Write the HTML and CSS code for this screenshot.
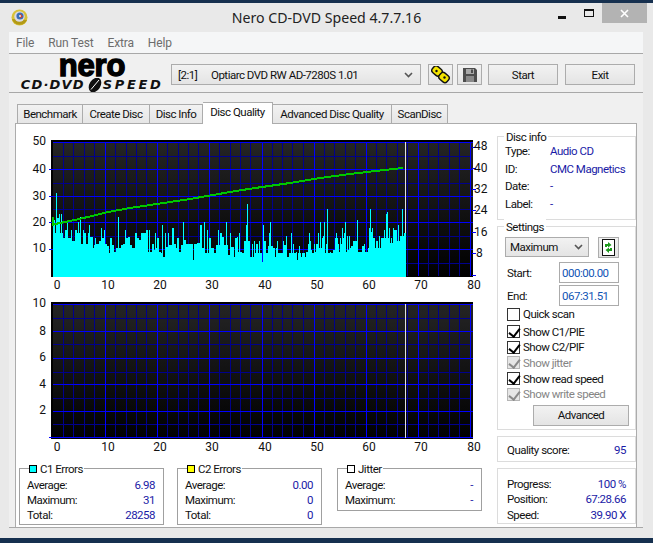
FILE: index.html
```html
<!DOCTYPE html>
<html lang="en">
<head>
<meta charset="utf-8">
<title>Nero CD-DVD Speed</title>
<link rel="stylesheet" href="styles.css">
</head>
<body>
<div class="window">
  <header class="titlebar">
    <svg class="app-icon" width="17" height="17" viewBox="0 0 17 17">
      <circle cx="8.5" cy="8.5" r="8" fill="#d8c23a"/>
      <path d="M1 10a8 8 0 0 0 15 1z" fill="#b39a16"/>
      <circle cx="8.5" cy="7.5" r="5.2" fill="#d9d9e4"/>
      <circle cx="9" cy="7" r="3.6" fill="#3a6fb8"/>
      <path d="M9 4.5l3 3-3 2z" fill="#d3432c"/>
      <circle cx="9" cy="7" r="1" fill="#eee"/>
    </svg>
    <h1 class="title">Nero CD-DVD Speed 4.7.7.16</h1>
    <div class="caption">
      <span class="cap-min"></span>
      <span class="cap-max"></span>
      <span class="cap-close">
        <svg width="9" height="9" viewBox="0 0 9 9"><path d="M1 1l7 7M8 1l-7 7" stroke="#fff" stroke-width="1.6"/></svg>
      </span>
    </div>
  </header>

  <div class="client">
    <nav class="menu"><span>File</span><span>Run Test</span><span>Extra</span><span>Help</span></nav>

    <div class="toolbar">
      <div class="logo">
        <div class="logo-nero">nero</div>
        <div class="logo-sub">
          <span class="logo-cd">CD·DVD</span>
          <svg class="logo-disc" width="18" height="14" viewBox="0 0 18 14">
            <ellipse cx="9" cy="7" rx="5.5" ry="8" transform="rotate(32 9 7)" fill="#111"/>
            <path d="M5 11.5L13 2" stroke="#fff" stroke-width="1"/>
          </svg>
          <span class="logo-speed">SPEED</span>
        </div>
      </div>
      <div class="combo drive"><span class="drive-id">[2:1]</span><span>Optiarc DVD RW AD-7280S 1.01</span><svg class="chev" width="9" height="6" viewBox="0 0 9 6"><path d="M1 1l3.500 3.500L8 1" fill="none" stroke="#555" stroke-width="1.6"/></svg></div>
      <button class="btn icon-btn gear">
        <svg width="20" height="18" viewBox="0 0 20 18">
          <g stroke="#111" stroke-width="1.4" fill="#f4e500">
            <rect x="1" y="1" width="10" height="8" rx="3" transform="rotate(40 6 5)"/>
            <rect x="8" y="7.500" width="10" height="8" rx="3" transform="rotate(40 13 11.500)"/>
          </g>
          <circle cx="5.500" cy="5" r="1.200" fill="#111"/><circle cx="13.500" cy="11.500" r="1.200" fill="#111"/>
        </svg>
      </button>
      <button class="btn icon-btn save">
        <svg width="14" height="14" viewBox="0 0 14 14">
          <path d="M0 0h12l2 2v12H0z" fill="#4d4d4d"/>
          <rect x="3" y="1" width="8" height="5" fill="#a9a9a9"/>
          <rect x="8" y="1.500" width="2" height="3.500" fill="#4d4d4d"/>
          <rect x="3" y="8" width="8" height="6" fill="#8a8a8a"/>
        </svg>
      </button>
      <button class="btn act start">Start</button>
      <button class="btn act exit">Exit</button>
    </div>

    <div class="tabs">
      <div class="tab">Benchmark</div>
      <div class="tab">Create Disc</div>
      <div class="tab">Disc Info</div>
      <div class="tab active">Disc Quality</div>
      <div class="tab">Advanced Disc Quality</div>
      <div class="tab">ScanDisc</div>
    </div>

    <main class="panel">
      <section class="charts">
        <svg class="chart first" width="481" height="164" viewBox="16 130 481 164">
          <defs>
            <linearGradient id="plotbg" x1="0" y1="0" x2="0" y2="1">
              <stop offset="0" stop-color="#252525"/><stop offset="1" stop-color="#000"/>
            </linearGradient>
          </defs>
          <rect x="51" y="140" width="422" height="137" fill="url(#plotbg)"/>
          <rect x="51" y="140" width="422" height="2" fill="#000"/>
          <rect x="51" y="140" width="2" height="137" fill="#000"/>
          <g class="grid-crisp">
            <path class="minor" d="M63 142V276M73 142V276M84 142V276M94 142V276M115 142V276M126 142V276M136 142V276M146 142V276M167 142V276M178 142V276M188 142V276M198 142V276M219 142V276M230 142V276M240 142V276M250 142V276M272 142V276M282 142V276M292 142V276M303 142V276M324 142V276M334 142V276M345 142V276M355 142V276M376 142V276M386 142V276M397 142V276M407 142V276M428 142V276M438 142V276M449 142V276M459 142V276M53 156H471M53 183H471M53 209H471M53 236H471M53 263H471"/>
            <path class="major" d="M105 142V276M157 142V276M209 142V276M262 142V276M314 142V276M366 142V276M418 142V276M470 142V276M53 142.500H473M53 169.500H473M53 196.500H473M53 222.500H473M53 249.500H473M49 169.500H53M49 196.500H53M49 222.500H53M49 249.500H53M472 147H476M472 168H476M472 189H476M472 210H476M472 232H476M472 253H476M472 275.500H476"/>
            <path class="marker" d="M405 142V276"/>
            <g transform="translate(50 185) scale(.33333)">
              <path class="c1" d="M9 275V105H15V145H18V25H21V100H27V87H30V145H33V87H36V145H39V160H45V135H51V105H54V160H63V135H66V168H75V135H81V145H85V110H88V145H90V96H93V178H99V135H102V145H108V178H114V145H117V120H120V155H129V190H132V180H135V158H138V178H147V168H153V128H156V160H162V135H165V178H171V182H177V205H180V158H186V180H192V200H198V190H204V96H207V190H213V180H219V178H225V135H228V158H234V155H240V180H246V190H255V145H261V158H267V165H273V145H288V135H294V200H297V135H300V200H306V178H312V195H315V145H318V190H321V158H327V200H333V205H336V120H339V215H345V145H348V185H354V145H357V180H366V130H372V178H378V188H381V158H387V200H393V180H399V110H402V165H408V178H429V225H432V178H441V175H450V120H456V190H462V110H465V205H471V135H474V205H477V160H483V190H492V205H498V180H504V135H507V180H510V145H516V155H522V180H528V110H531V180H534V210H540V275Z"/>
            </g>
            <g transform="translate(230 185) scale(.33333)">
              <path class="c1" d="M0 275V145H4V185H12V215H15V160H20V155H24V200H27V145H30V200H36V205H42V168H48V120H51V57H54V168H60V215H66V178H69V215H72V168H75V205H78V178H84V205H87V168H90V205H96V230H99V120H102V168H108V205H114V182H117V145H120V112H123V182H129V190H135V215H138V190H141V168H145V205H156V205H159V168H162V180H168V153H171V215H177V205H183V145H186V205H189V178H192V205H198V200H201V225H204V205H207V182H210V205H213V215H216V205H225V215H228V200H234V178H237V145H240V168H243V195H246V205H252V178H255V200H258V178H264V145H267V190H270V112H273V190H276V160H279V153H282V112H285V205H288V178H291V72H294V205H300V200H303V205H309V195H315V158H318V145H321V158H324V178H327V200H330V158H333V178H336V130H339V160H342V145H345V112H348V200H351V153H354V195H357V153H360V190H363V182H369V168H381V105H384V200H396V182H402V178H405V200H414V190H417V130H420V72H423V140H426V130H429V158H435V190H438V168H444V190H447V153H450V190H453V158H462V135H465V158H468V88H471V82H474V158H477V130H480V175H483V158H486V175H489V130H492V135H501V168H504V120H507V168H510V153H516V72H519V153H522V145H528V275Z"/>
            </g>
            <polyline class="speed" points="53,217 53,225 55,224 70,221 90,216.500 108,212 130,208 160,203.500 190,199 230,192 255,188 290,183 320,178 350,174 380,170.500 403,168"/>
          </g>
          <g class="axis end">
            <text x="46" y="145">50</text><text x="46" y="173">40</text><text x="46" y="200">30</text><text x="46" y="226">20</text><text x="46" y="252">10</text>
          </g>
          <g class="axis">
            <text x="474" y="150">48</text><text x="474" y="172">40</text><text x="474" y="193">32</text><text x="474" y="214">24</text><text x="474" y="236">16</text><text x="476" y="257">8</text>
          </g>
          <g class="axis mid">
            <text x="57" y="289">0</text><text x="108" y="289">10</text><text x="160" y="289">20</text><text x="212" y="289">30</text><text x="265" y="289">40</text><text x="317" y="289">50</text><text x="369" y="289">60</text><text x="421" y="289">70</text><text x="474" y="289">80</text>
          </g>
        </svg>

        <svg class="chart second" width="481" height="164" viewBox="16 295 481 164">
          <rect x="51" y="302" width="422" height="137" fill="url(#plotbg)"/>
          <rect x="51" y="302" width="422" height="2" fill="#000"/>
          <rect x="51" y="302" width="2" height="137" fill="#000"/>
          <g class="grid-crisp">
            <path class="minor" d="M63 304V438M73 304V438M84 304V438M94 304V438M115 304V438M126 304V438M136 304V438M146 304V438M167 304V438M178 304V438M188 304V438M198 304V438M219 304V438M230 304V438M240 304V438M250 304V438M272 304V438M282 304V438M292 304V438M303 304V438M324 304V438M334 304V438M345 304V438M355 304V438M376 304V438M386 304V438M397 304V438M407 304V438M428 304V438M438 304V438M449 304V438M459 304V438M53 318H471M53 344H471M53 372H471M53 398H471M53 424H471"/>
            <path class="major" d="M105 304V438M157 304V438M209 304V438M262 304V438M314 304V438M366 304V438M418 304V438M470 304V438M53 304.500H473M53 331.500H473M53 358.500H473M53 384.500H473M53 411.500H473M49 437.500H473"/>
            <path class="marker" d="M405 304V438"/>
          </g>
          <g class="axis end">
            <text x="46" y="307">10</text><text x="46" y="335">8</text><text x="46" y="361">6</text><text x="46" y="388">4</text><text x="46" y="414">2</text>
          </g>
          <g class="axis mid">
            <text x="57" y="451">0</text><text x="108" y="451">10</text><text x="160" y="451">20</text><text x="212" y="451">30</text><text x="265" y="451">40</text><text x="317" y="451">50</text><text x="369" y="451">60</text><text x="421" y="451">70</text><text x="474" y="451">80</text>
          </g>
        </svg>

        <div class="stats">
          <div class="stat">
            <div class="stat-legend"><i class="swatch cyan"></i>C1 Errors</div>
            <div class="row"><span>Average:</span><b>6.98</b></div>
            <div class="row"><span>Maximum:</span><b>31</b></div>
            <div class="row"><span>Total:</span><b>28258</b></div>
          </div>
          <div class="stat">
            <div class="stat-legend"><i class="swatch yellow"></i>C2 Errors</div>
            <div class="row"><span>Average:</span><b>0.00</b></div>
            <div class="row"><span>Maximum:</span><b>0</b></div>
            <div class="row"><span>Total:</span><b>0</b></div>
          </div>
          <div class="stat short">
            <div class="stat-legend"><i class="swatch white"></i>Jitter</div>
            <div class="row"><span>Average:</span><b>-</b></div>
            <div class="row"><span>Maximum:</span><b>-</b></div>
          </div>
        </div>
      </section>

      <aside class="side">
        <section class="box info">
          <div class="box-legend">Disc info</div>
          <div class="info-row"><span>Type:</span><b>Audio CD</b></div>
          <div class="info-row"><span>ID:</span><b>CMC Magnetics</b></div>
          <div class="info-row"><span>Date:</span><b>-</b></div>
          <div class="info-row"><span>Label:</span><b>-</b></div>
        </section>

        <section class="box settings">
          <div class="box-legend">Settings</div>
          <div class="mode-row">
            <div class="combo mode"><span>Maximum</span><svg class="chev" width="9" height="6" viewBox="0 0 9 6"><path d="M1 1l3.500 3.500L8 1" fill="none" stroke="#555" stroke-width="1.6"/></svg></div>
            <button class="btn refresh">
              <svg width="13" height="17" viewBox="0 0 13 17">
                <rect x=".5" y=".5" width="12" height="16" fill="#fff" stroke="#111"/>
                <path d="M3 8V5h3V3l3.500 3L6 8.500V7H5v1z" fill="#1d9a1d"/>
                <path d="M10 9v3H7v2l-3.500-3L7 8.500V10h1V9z" fill="#1d9a1d"/>
              </svg>
            </button>
          </div>
          <div class="field"><label>Start:</label><span class="input">000:00.00</span></div>
          <div class="field"><label>End:</label><span class="input">067:31.51</span></div>
          <div class="check quick"><i class="cb"></i>Quick scan</div>
          <div class="check"><i class="cb on"></i>Show C1/PIE</div>
          <div class="check"><i class="cb on"></i>Show C2/PIF</div>
          <div class="check off"><i class="cb on"></i>Show jitter</div>
          <div class="check"><i class="cb on"></i>Show read speed</div>
          <div class="check off"><i class="cb on"></i>Show write speed</div>
          <button class="btn advanced">Advanced</button>
        </section>

        <section class="box quality">
          <div class="row"><span>Quality score:</span><b>95</b></div>
        </section>

        <section class="box progress">
          <div class="row"><span>Progress:</span><b>100 %</b></div>
          <div class="row"><span>Position:</span><b>67:28.66</b></div>
          <div class="row"><span>Speed:</span><b>39.90 X</b></div>
        </section>
      </aside>
    </main>
  </div>
</div>
</body>
</html>
```

FILE: styles.css
```css
* { box-sizing: border-box; }

html, body {
  margin: 0;
  padding: 0;
}

body {
  width: 653px;
  height: 543px;
  overflow: hidden;
  padding-top: 3px;
  background: #16304f;
  font-family: "Roboto", "Liberation Sans", sans-serif;
  font-size: 11.5px;
  letter-spacing: -0.5px;
  color: #111;
}

.window {
  height: 535px;
  background: #e9e9e9;
}

.titlebar {
  position: relative;
  height: 29px;
  display: flex;
  align-items: center;
  justify-content: center;
}

.app-icon {
  position: absolute;
  left: 11px;
  top: 6px;
}

.title {
  margin: 0;
  font-family: "Noto Sans", sans-serif;
  font-size: 14.15px;
  font-weight: 400;
  letter-spacing: 0;
  color: #222;
}

.caption {
  position: absolute;
  right: 6px;
  top: 0;
  display: flex;
  height: 20px;
}

.cap-min {
  width: 8px;
  height: 3px;
  margin: 13px 18px 0 0;
  background: #111;
}

.cap-max {
  width: 10px;
  height: 8px;
  margin: 6px 8px 0 0;
  border: 1px solid #111;
  border-top-width: 2px;
}

.cap-close {
  width: 45px;
  height: 20px;
  background: #b3b3b3;
  display: flex;
  align-items: center;
  justify-content: center;
}

.client {
  width: 634px;
  height: 496px;
  margin-left: 9px;
  background: #f0f0f0;
  border-bottom: 1px solid #a8a8a8;
}

.menu {
  height: 22px;
  padding: 0 7px;
  display: flex;
  gap: 14px;
  align-items: center;
  background: #f5f6f7;
  border-bottom: 1px solid #a8a8a8;
  color: #6d6d6d;
  font-size: 12px;
  letter-spacing: -0.15px;
}

.toolbar {
  height: 39px;
  padding: 2px 0 0 10px;
  display: flex;
  align-items: flex-start;
  border-bottom: 1px solid #a8a8a8;
}

.logo {
  width: 152px;
  height: 36px;
  padding-right: 6px;
  display: flex;
  flex-direction: column;
  align-items: center;
}

.logo-nero {
  height: 22px;
  font-family: "Liberation Sans", sans-serif;
  font-weight: 700;
  font-size: 31px;
  line-height: 19px;
  letter-spacing: -0.2px;
  -webkit-text-stroke: 1.4px #000;
  color: #000;
}

.logo-sub {
  display: flex;
  align-items: center;
  height: 14px;
  font-family: "DejaVu Sans", sans-serif;
  font-weight: 700;
  font-style: italic;
  font-size: 13px;
  line-height: 14px;
  color: #111;
}

.logo-cd { letter-spacing: 1.2px; }
.logo-speed { letter-spacing: 2.6px; }
.logo-disc { flex: none; margin: 0 -1px 0 1px; }

.btn {
  display: flex;
  align-items: center;
  justify-content: center;
  padding: 0;
  font: inherit;
  letter-spacing: inherit;
  color: #111;
  background: linear-gradient(#f2f2f2, #e4e4e4);
  border: 1px solid #acacac;
}

.combo {
  display: flex;
  align-items: center;
  background: linear-gradient(#f2f2f2, #e4e4e4);
  border: 1px solid #acacac;
}

.chev { margin-left: auto; }

.drive {
  width: 250px;
  height: 21px;
  margin-top: 8px;
  padding: 0 7px 0 6px;
}

.drive-id { width: 33px; }

.icon-btn {
  height: 21px;
  margin-top: 8px;
}

.gear { width: 25px; margin-left: 7px; }
.save { width: 25px; margin-left: 4px; }

.act {
  width: 70px;
  height: 21px;
  margin-top: 8px;
}

.start { margin-left: 6px; }
.exit { margin-left: 7px; }

.tabs {
  height: 30px;
  padding-left: 8px;
  display: flex;
  align-items: flex-end;
}

.tab {
  position: relative;
  height: 19px;
  display: flex;
  align-items: center;
  justify-content: center;
  background: linear-gradient(#f2f2f2, #e6e6e6);
  border: 1px solid #acacac;
  border-bottom: 0;
  border-left-width: 0;
}

.tab:first-child { border-left-width: 1px; width: 66px; }
.tab:nth-child(2) { width: 67px; }
.tab:nth-child(3) { width: 53px; }
.tab:nth-child(4) { width: 70px; }
.tab:nth-child(5) { width: 119px; }
.tab:nth-child(6) { width: 56px; }

.tab.active {
  height: 22px;
  margin-bottom: -1px;
  padding-bottom: 3px;
  background: #fff;
  z-index: 1;
}

.panel {
  width: 622px;
  height: 404px;
  margin-left: 6px;
  display: flex;
  background: #fff;
  border: 1px solid #acacac;
  border-bottom: 0;
}

.charts {
  width: 481px;
  padding-top: 6px;
}

.chart {
  display: block;
}

.second { margin-top: 1px; }

.grid-crisp { shape-rendering: crispEdges; }

.minor {
  stroke: #00008c;
  stroke-width: 1;
  fill: none;
}

.major {
  stroke: #0000ff;
  stroke-width: 1;
  fill: none;
}

.marker {
  stroke: #e0e0e0;
  stroke-width: 1;
}

.c1 { fill: #00ffff; }

.speed {
  fill: none;
  stroke: #00c800;
  stroke-width: 2;
}

.axis {
  font-family: "Roboto", "Liberation Sans", sans-serif;
  font-size: 12px;
  letter-spacing: 0;
  fill: #111;
}

.end { text-anchor: end; }
.mid { text-anchor: middle; }

.stats {
  margin-top: 9px;
  padding-left: 3px;
  display: flex;
  align-items: flex-start;
}

.stat {
  position: relative;
  width: 145px;
  height: 57px;
  margin-right: 13px;
  padding: 8px 8px 0 7px;
  border: 1px solid #a0a0a0;
}

.stat:nth-child(2) { margin-right: 15px; }

.stat.short { height: 43px; }

.stat-legend {
  position: absolute;
  left: 9px;
  top: -8px;
  height: 16px;
  padding-right: 1px;
  display: flex;
  align-items: center;
  gap: 3px;
  background: #fff;
}

.swatch {
  width: 8px;
  height: 8px;
  border: 1px solid #000;
}

.cyan { background: #00ffff; }
.yellow { background: #ffff00; }
.white { background: #fff; }

.row {
  height: 15px;
  display: flex;
  align-items: center;
  justify-content: space-between;
}

.row b,
.info-row b {
  font-weight: 400;
  color: #1a1aa6;
}

.side {
  width: 139px;
  padding-top: 12px;
}

.box {
  position: relative;
  border: 1px solid #dcdcdc;
  margin-bottom: 6px;
}

.box-legend {
  position: absolute;
  left: 6px;
  top: -8px;
  height: 15px;
  padding: 0 2px;
  display: flex;
  align-items: center;
  background: #fff;
}

.info {
  height: 84px;
  padding: 5px 0 0 7px;
}

.info-row {
  height: 17.7px;
  display: flex;
  align-items: center;
}

.info-row span { width: 45px; }

.settings {
  height: 204px;
  padding: 10px 0 0 7px;
}

.mode-row {
  display: flex;
  align-items: center;
  gap: 9px;
  height: 20px;
}

.mode {
  width: 84px;
  height: 20px;
  padding: 0 5px 0 4px;
}

.refresh {
  width: 21px;
  height: 21px;
}

.field {
  height: 23px;
  display: flex;
  align-items: center;
  padding-left: 2px;
}

.mode-row + .field { margin-top: 4px; }

.field label { width: 52px; }

.input {
  width: 60px;
  height: 21px;
  padding-left: 2px;
  display: flex;
  align-items: center;
  background: #fff;
  border: 1px solid #ababab;
  color: #1155b5;
}

.check {
  height: 15.6px;
  display: flex;
  align-items: center;
  gap: 3px;
  padding-left: 2px;
}

.quick {
  height: 14px;
  margin-bottom: 3px;
}

.off { color: #858585; }

.cb {
  position: relative;
  width: 13px;
  height: 13px;
  background: #fff;
  border: 1px solid #333;
}

.off .cb {
  background: #e6e6e6;
  border-color: #b5b5b5;
}

.cb.on::after {
  content: "";
  position: absolute;
  left: 3px;
  top: 0;
  width: 5px;
  height: 9px;
  border: solid #000;
  border-width: 0 2px 2px 0;
  transform: rotate(38deg);
}

.off .cb.on::after { border-color: #8a8a8a; }

.advanced {
  width: 96px;
  height: 21px;
  margin: 3px 0 0 28px;
}

.quality {
  height: 26px;
  padding: 5px 9px 0 9px;
}

.progress {
  height: 56px;
  padding: 7px 9px 0 9px;
}

.progress .row { height: 15.5px; }
```
